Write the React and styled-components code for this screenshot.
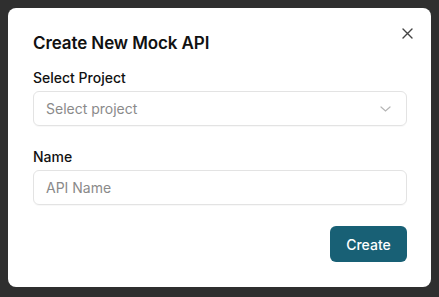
import React from 'react';
import styled, { createGlobalStyle } from 'styled-components';

const GlobalStyle = createGlobalStyle`
  * { box-sizing: border-box; }
  html, body {
    margin: 0;
    padding: 0;
    background: #2f2f2f;
    font-family: Inter, "Noto Sans", sans-serif;
  }
`;

const Page = styled.div`
  width: 439px;
  height: 297px;
  padding: 8px 8px 10px;
`;

const Modal = styled.div`
  position: relative;
  width: 423px;
  height: 279px;
  background: #fff;
  border-radius: 8px;
  padding: 23px 24px 24px 25px;
  display: flex;
  flex-direction: column;
`;

const Title = styled.h2`
  margin: 0 0 13px;
  font-size: 17px;
  line-height: 24px;
  font-weight: 600;
  color: #111;
  letter-spacing: -0.1px;
`;

const CloseButton = styled.button`
  position: absolute;
  top: 18px;
  right: 17px;
  width: 14px;
  height: 14px;
  padding: 0;
  border: none;
  background: none;
  display: flex;
  align-items: center;
  justify-content: center;
  color: #444;
  cursor: pointer;
`;

const Field = styled.div`
  display: flex;
  flex-direction: column;
  gap: 3px;
  margin-bottom: ${(p) => p.$space}px;
`;

const Label = styled.label`
  font-size: 14px;
  line-height: 20px;
  font-weight: 500;
  color: #111;
`;

const Box = styled.div`
  position: relative;
  height: 35px;
  border: 1px solid #e3e3e3;
  border-radius: 6px;
  display: flex;
  align-items: center;
  padding: 0 12px;
  font-size: 14px;
  color: #8a8a8a;
  box-shadow: 0 1px 1px rgba(0, 0, 0, 0.03);
`;

const Chevron = styled.svg`
  position: absolute;
  right: 15px;
  top: 14px;
`;

const Footer = styled.div`
  display: flex;
  justify-content: flex-end;
`;

const PrimaryButton = styled.button`
  width: 77px;
  height: 36px;
  border: none;
  border-radius: 6px;
  background: #186075;
  color: #fff;
  font-family: inherit;
  font-size: 14px;
  font-weight: 500;
  cursor: pointer;
`;

export default function App() {
  return (
    <>
      <GlobalStyle />
      <Page>
        <Modal>
          <CloseButton aria-label="Close">
            <svg width="11" height="11" viewBox="0 0 11 11">
              <path d="M1 1L10 10M10 1L1 10" stroke="currentColor" strokeWidth="1.4" strokeLinecap="round" />
            </svg>
          </CloseButton>
          <Title>Create New Mock API</Title>
          <Field $space={21}>
            <Label>Select Project</Label>
            <Box>
              Select project
              <Chevron width="11" height="6" viewBox="0 0 11 6">
                <path d="M1 1L5.5 5L10 1" fill="none" stroke="#b5b5b5" strokeWidth="1.2" strokeLinecap="round" />
              </Chevron>
            </Box>
          </Field>
          <Field $space={21}>
            <Label>Name</Label>
            <Box>API Name</Box>
          </Field>
          <Footer>
            <PrimaryButton>Create</PrimaryButton>
          </Footer>
        </Modal>
      </Page>
    </>
  );
}
